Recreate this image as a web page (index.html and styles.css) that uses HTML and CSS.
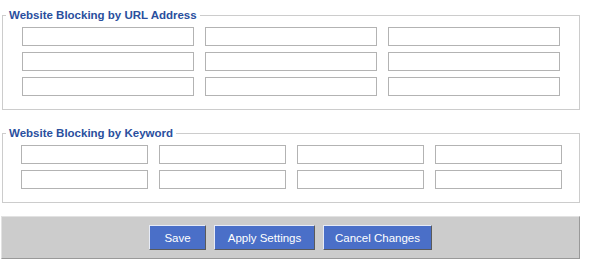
FILE: index.html
```html
<!DOCTYPE html>
<html lang="en">
<head>
    <meta charset="UTF-8">
    <title>Website Blocking</title>
    <link rel="stylesheet" href="styles.css">
</head>
<body>
    <div class="page">
        <fieldset class="block-group">
            <legend class="block-title">Website Blocking by URL Address</legend>
            <div class="field-grid url-grid">
                <input type="text" class="text-field">
                <input type="text" class="text-field">
                <input type="text" class="text-field">
                <input type="text" class="text-field">
                <input type="text" class="text-field">
                <input type="text" class="text-field">
                <input type="text" class="text-field">
                <input type="text" class="text-field">
                <input type="text" class="text-field">
            </div>
        </fieldset>

        <fieldset class="block-group keyword-group">
            <legend class="block-title">Website Blocking by Keyword</legend>
            <div class="field-grid keyword-grid">
                <input type="text" class="text-field" autofocus>
                <input type="text" class="text-field">
                <input type="text" class="text-field">
                <input type="text" class="text-field">
                <input type="text" class="text-field">
                <input type="text" class="text-field">
                <input type="text" class="text-field">
                <input type="text" class="text-field">
            </div>
        </fieldset>

        <div class="button-bar">
            <button class="btn btn-save">Save</button>
            <button class="btn btn-apply">Apply Settings</button>
            <button class="btn btn-cancel">Cancel Changes</button>
        </div>
    </div>
</body>
</html>
```

FILE: styles.css
```css
* {
    margin: 0;
    padding: 0;
    box-sizing: border-box;
}

body {
    background: #ffffff;
    font-family: 'Liberation Sans', Arial, sans-serif;
    font-size: 11px;
}

.page {
    width: 580px;
    padding-left: 1px;
}

.block-group {
    margin: 8px 0 0 1px;
    padding: 5px 0 13px 3px;
    border: 1px solid #cccccc;
}

.keyword-group {
    margin-top: 16px;
}

.block-title {
    padding: 0 3px;
    height: 14px;
    line-height: 14px;
    font-size: 11.5px;
    font-weight: bold;
    color: #2a4f9e;
}

.field-grid {
    display: grid;
    row-gap: 6px;
    column-gap: 11px;
}

.url-grid {
    grid-template-columns: repeat(3, 172px);
    margin-left: 16px;
}

.keyword-grid {
    grid-template-columns: repeat(4, 127px);
    margin-left: 15px;
}

.text-field {
    height: 19px;
    border: 1px solid #b3b3b3;
    background: #ffffff;
    padding: 0 2px;
    font-family: 'Liberation Sans', Arial, sans-serif;
    font-size: 11px;
    outline: none;
}

.button-bar {
    margin-top: 13px;
    height: 43px;
    display: flex;
    justify-content: center;
    align-items: flex-start;
    gap: 8px;
    padding-top: 8px;
    background: #cccccc;
    border: 1px solid;
    border-color: #e2e2e2 #999999 #999999 #e2e2e2;
}

.btn {
    height: 25px;
    padding: 0 10px;
    background: #4a6fc8;
    color: #ffffff;
    font-family: 'Liberation Sans', Arial, sans-serif;
    font-size: 11.5px;
    border: 1px solid;
    border-color: #e6ebf7 #5a5a5a #5a5a5a #e6ebf7;
    cursor: pointer;
}

.btn-save {
    width: 57px;
}

.btn-apply {
    width: 101px;
}

.btn-cancel {
    width: 109px;
}
```
